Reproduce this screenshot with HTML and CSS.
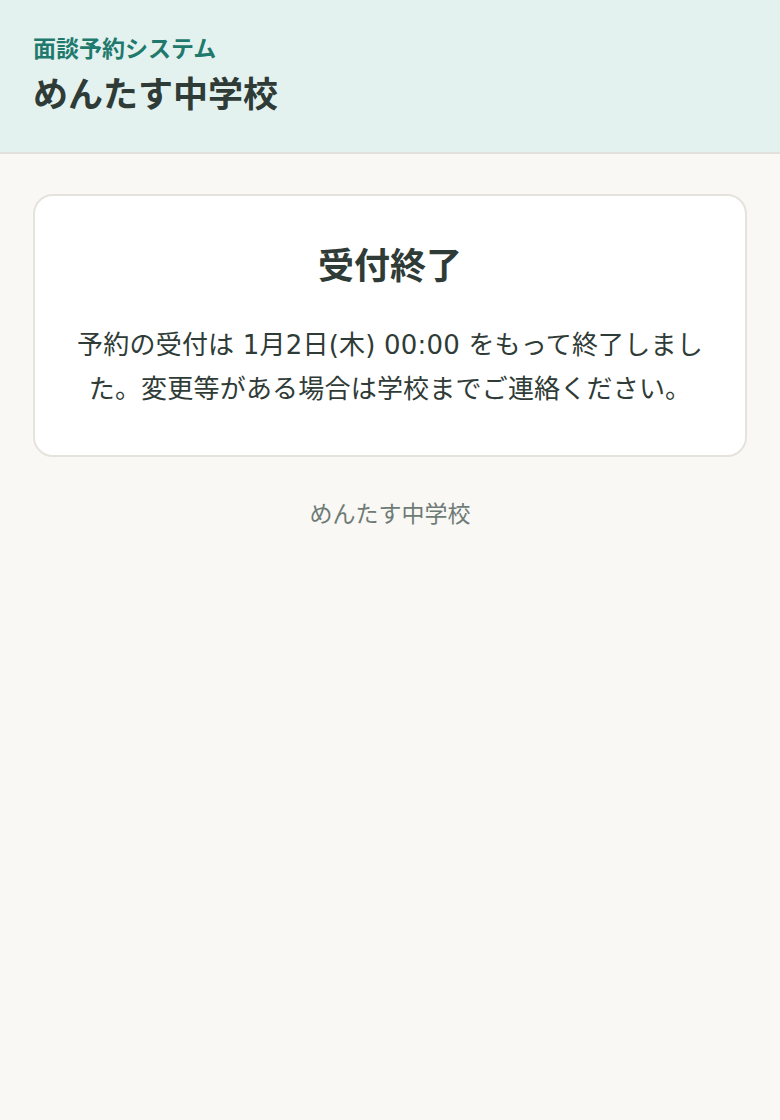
FILE: index.html
```html
<!DOCTYPE html>
<html lang="ja">
<head>
<meta charset="utf-8">
<title>めんたす中学校</title>
<link rel="stylesheet" href="styles.css">
</head>
<body>
<header class="site-header">
  <p class="system-name">面談予約システム</p>
  <h1 class="school-name">めんたす中学校</h1>
</header>
<main class="main">
  <section class="card">
    <h2 class="card-title">受付終了</h2>
    <p class="card-text">予約の受付は 1月2日(木) 00:00 をもって終了しました。変更等がある場合は学校までご連絡ください。</p>
  </section>
  <footer class="footer">めんたす中学校</footer>
</main>
</body>
</html>
```

FILE: styles.css
```css
* { box-sizing: border-box; }
html, body {
  margin: 0;
  padding: 0;
  background: #f9f8f5;
  color: #2f3b36;
  font-family: "Noto Sans CJK JP", "Noto Sans", sans-serif;
}
.site-header {
  background: #e4f2ef;
  border-bottom: 2px solid #e3e1dc;
  padding: 30px 33px 36px;
}
.system-name {
  margin: 0;
  color: #1f7a6d;
  font-size: 23px;
  font-weight: 700;
  line-height: 34px;
}
.school-name {
  margin: 4px 0 0;
  font-size: 35px;
  font-weight: 700;
  line-height: 48px;
}
.main {
  padding: 40px 33px 40px;
}
.card {
  background: #ffffff;
  border: 2px solid #e5e3dc;
  border-radius: 20px;
  padding: 43px 36px 44px;
  text-align: center;
}
.card-title {
  margin: 0;
  font-size: 36px;
  font-weight: 700;
  line-height: 48px;
}
.card-text {
  margin: 36px 0 0;
  font-family: "DejaVu Sans", "Noto Sans CJK JP", sans-serif;
  font-size: 26px;
  letter-spacing: 0.2px;
  line-height: 44px;
}
.footer {
  text-align: center;
  color: #6f7b76;
  font-size: 23px;
  margin-top: 38px;
}
```
